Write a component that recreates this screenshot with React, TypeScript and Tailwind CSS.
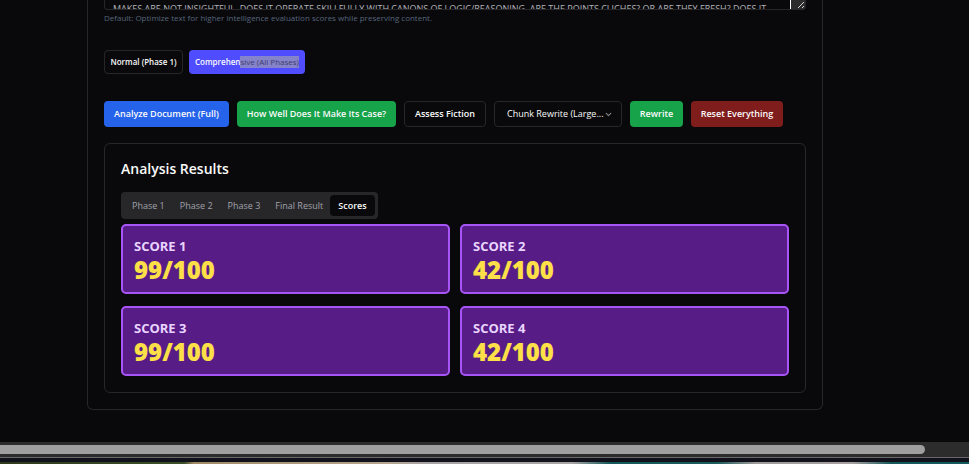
import { ChevronDown } from "lucide-react";

const scores = [
  { label: "SCORE 1", value: "99/100" },
  { label: "SCORE 2", value: "42/100" },
  { label: "SCORE 3", value: "99/100" },
  { label: "SCORE 4", value: "42/100" },
];

const tabs = ["Phase 1", "Phase 2", "Phase 3", "Final Result", "Scores"];

const instructions =
  "MAKES ARE NOT INSIGHTFUL. DOES IT OPERATE SKILLFULLY WITH CANONS OF LOGIC/REASONING. ARE THE POINTS CLICHES? OR ARE THEY FRESH? DOES IT";

const action =
  "flex h-[26px] items-center justify-center rounded text-[9px] font-semibold whitespace-nowrap";

function Instructions() {
  return (
    <div>
      <div className="relative">
        <textarea
          aria-label="Custom instructions"
          readOnly
          value={instructions}
          className="block h-[10px] w-full resize-none overflow-hidden whitespace-nowrap rounded-b border border-t-0 border-[#27272a] bg-transparent px-2 pt-[2px] text-[9px] leading-[14px] text-[#b4b4ba] outline-none"
        />
        <div className="absolute top-0 right-px flex h-[9px] w-[15px] border-l border-white bg-[#2c2c2c]">
          <svg viewBox="0 0 14 9" className="h-[9px] w-[14px]" fill="none" stroke="#d4d4d4">
            <path d="M7 8L13 2M11 8L13 6" />
          </svg>
        </div>
      </div>
      <p className="mt-[2px] text-[8px] leading-3 text-[#56657b]">
        Default: Optimize text for higher intelligence evaluation scores while preserving content.
      </p>
    </div>
  );
}

function ModeButtons() {
  return (
    <div className="mt-[26px] flex gap-[6px] text-[8px] font-semibold text-[#fafafa]">
      <button className="h-6 w-[79px] rounded border border-[#27272a] whitespace-nowrap">
        Normal (Phase 1)
      </button>
      <button className="h-6 w-[116px] rounded bg-[#4f4dff] whitespace-nowrap">
        Comprehen
        <span className="inline-block bg-[#8583c9] leading-3 font-medium text-[#3f3e6c]">
          sive (All Phases)
        </span>
      </button>
    </div>
  );
}

function Actions() {
  return (
    <div className="mt-[27px] flex gap-2 text-[#fafafa]">
      <button className={`${action} w-[125px] bg-[#2563eb]`}>Analyze Document (Full)</button>
      <button className={`${action} w-[159px] bg-[#16a34a]`}>How Well Does It Make Its Case?</button>
      <button className={`${action} w-[82px] border border-[#27272a]`}>Assess Fiction</button>
      <div className="relative w-32">
        <select
          aria-label="Rewrite mode"
          className="block h-[26px] w-full appearance-none rounded border border-[#27272a] bg-[#09090b] pl-3 text-[9px] font-medium"
        >
          <option>Chunk Rewrite (Large...</option>
        </select>
        <ChevronDown
          strokeWidth={3}
          className="pointer-events-none absolute top-[9px] right-[9px] size-[9px] text-[#85858a]"
        />
      </div>
      <button className={`${action} w-[53px] bg-[#16a34a]`}>Rewrite</button>
      <button className={`${action} w-[92px] bg-[#7f1d1d]`}>Reset Everything</button>
    </div>
  );
}

function Results() {
  return (
    <section className="mt-4 rounded-md border border-[#27272a] px-4 pt-[15px] pb-4">
      <h2 className="text-sm leading-5 font-semibold text-[#fafafa]">Analysis Results</h2>
      <div role="tablist" className="mt-[13px] inline-flex h-[27px] rounded bg-[#27272a] p-[3px] align-top">
        {tabs.map((tab) => (
          <button
            key={tab}
            role="tab"
            aria-selected={tab === "Scores"}
            className="rounded-sm pr-[7px] pl-2 text-[9px] font-medium whitespace-nowrap text-[#a1a1aa] aria-selected:bg-[#09090b] aria-selected:pr-2 aria-selected:font-semibold aria-selected:text-[#fafafa]"
          >
            {tab}
          </button>
        ))}
      </div>
      <div className="mt-[5px] grid grid-cols-2 gap-x-[10px] gap-y-3">
        {scores.map((score) => (
          <div
            key={score.label}
            className="rounded-[5px] border-2 border-[#a855f7] bg-[#581c87] px-[11px] pt-[10px] pb-2"
          >
            <div className="text-[13px] leading-5 font-bold text-[#e9d5ff]">{score.label}</div>
            <div className="text-2xl leading-7 font-black text-[#fde047]">{score.value}</div>
          </div>
        ))}
      </div>
    </section>
  );
}

export default function App() {
  return (
    <div className="flex min-h-screen flex-col overflow-hidden bg-[#09090b] font-['Open_Sans','Noto_Sans',sans-serif]">
      <main className="mr-[146px] mb-auto ml-[87px] rounded-b-md border border-t-0 border-[#27272a] px-4 pb-4">
        <Instructions />
        <ModeButtons />
        <Actions />
        <Results />
      </main>
      <footer>
        <div className="border-b border-[#6a6a6c] bg-[#2c2c2c] py-[3px]">
          <div className="mr-11 h-[9px] rounded-r-full bg-[#9f9f9f]" />
        </div>
        <div className="h-1 bg-[#11121b]" />
        <div className="h-[2px] bg-[linear-gradient(90deg,#2f3a1c_0%,#3c4f2a_19%,#a08b66_20%,#b5a58f_40%,#a8a3a4_44%,#aaa5a5_59%,#15595a_63%,#1b5c5c_74%,#a09a9a_78%,#a8a0a0_88%,#15595a_92%)]" />
      </footer>
    </div>
  );
}
